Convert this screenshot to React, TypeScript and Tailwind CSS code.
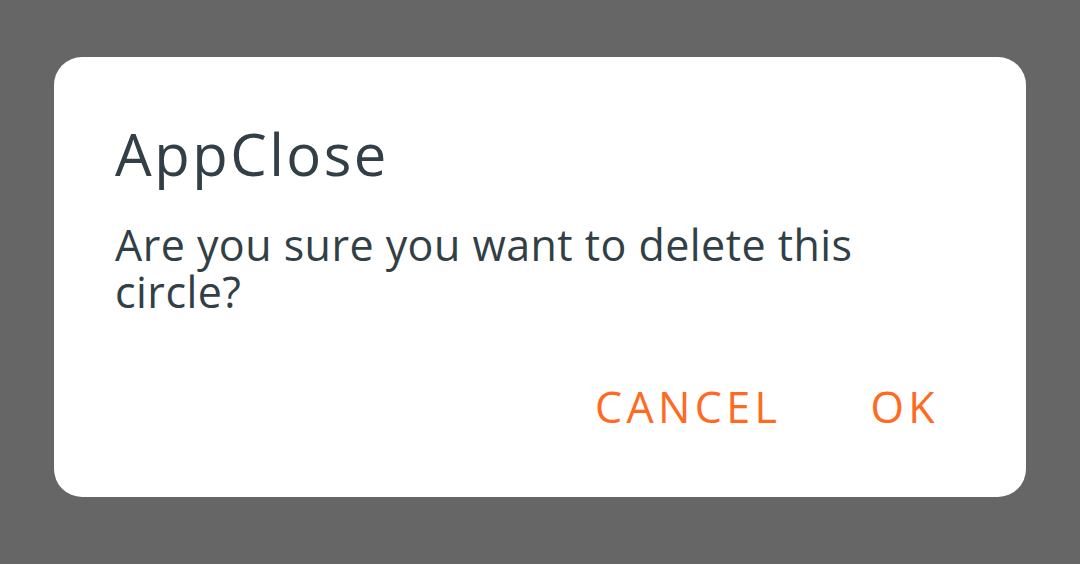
export default function App() {
  return (
    <div className="h-[564px] w-[1080px] bg-[#666666] pt-[57px] px-[54px] font-['Open_Sans',sans-serif]">
      <div className="h-[440px] rounded-[28px] bg-white px-[61px] flex flex-col">
        <h1 className="mt-[62px] text-[58px] leading-[70px] tracking-[2.5px] text-[#323f46]">AppClose</h1>
        <p className="mt-[32px] text-[43px] leading-[47px] tracking-[0.45px] text-[#323f46]">
          Are you sure you want to delete this circle?
        </p>
        <div className="mt-auto mb-[70px] mr-[26px] flex justify-end gap-[89px] text-[43px] leading-[40px] tracking-[4.4px] text-[#ff6a1f]">
          <button>CANCEL</button>
          <button>OK</button>
        </div>
      </div>
    </div>
  );
}
